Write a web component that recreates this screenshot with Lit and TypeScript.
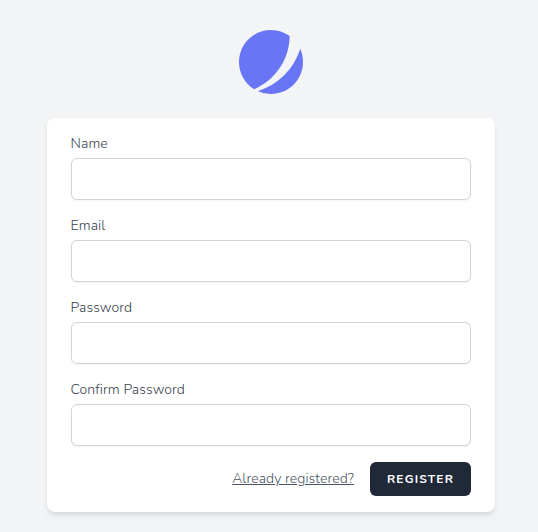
import { LitElement, html, css } from "lit";
import { customElement } from "lit/decorators.js";

const FIELDS = ["Name", "Email", "Password", "Confirm Password"];

@customElement("app-root")
export class AppRoot extends LitElement {
  static styles = css`
    :host { display: flex; flex-direction: column; align-items: center; box-sizing: border-box; height: 532px; padding: 30px 0 0 4px; background: #f3f4f6; font-family: Nunito, "Open Sans", sans-serif; color: #374151; overflow: hidden; }
    .logo { display: block; width: 64px; height: 64px; }
    .card { box-sizing: border-box; width: 448px; height: 394px; margin-top: 24px; padding: 16px 24px; background: #fff; border-radius: 8px; box-shadow: 0 4px 6px -1px rgba(0,0,0,.1), 0 2px 4px -1px rgba(0,0,0,.06); }
    .field { display: block; margin-bottom: 16px; }
    .label { display: block; height: 20px; margin-bottom: 4px; font-weight: 360; font-size: 14px; line-height: 20px; letter-spacing: 0.08px; text-indent: -0.4px; }
    .input { display: block; box-sizing: border-box; width: 100%; height: 42px; padding: 8px 12px; font: inherit; background: #fff; border: 1px solid #d1d5db; border-radius: 6px; box-shadow: 0 1px 2px rgba(0,0,0,.05); outline: none; }
    .actions { display: flex; align-items: center; justify-content: flex-end; gap: 16px; height: 34px; }
    .link { font-weight: 360; font-size: 14px; line-height: 20px; letter-spacing: 0.08px; color: #4b5563; text-decoration: underline; }
    .button { box-sizing: border-box; width: 101px; height: 34px; padding: 8px 0; border: 1px solid transparent; border-radius: 6px; background: #1f2937; color: #fff; font: 660 12px/16px Nunito, "Open Sans", sans-serif; letter-spacing: 1.15px; text-transform: uppercase; }
  `;
  render() {
    return html`
      <svg class="logo" viewBox="0 0 48 48" fill="none" aria-hidden="true">
        <path d="M11.395 44.428C4.557 40.198 0 32.632 0 24 0 10.745 10.745 0 24 0a23.891 23.891 0 0113.997 4.502c-.2 17.907-11.097 33.245-26.602 39.926z" fill="#6875F5"/>
        <path d="M14.134 45.885A23.914 23.914 0 0024 48c13.255 0 24-10.745 24-24 0-3.516-.756-6.856-2.115-9.866-4.659 15.143-16.608 27.092-31.75 31.751z" fill="#6875F5"/>
      </svg>
      <form class="card">
        ${FIELDS.map((f) => html`<label class="field"><span class="label">${f}</span><input class="input" /></label>`)}
        <div class="actions"><a class="link">Already registered?</a><button class="button" type="button">Register</button></div>
      </form>`;
  }
}
